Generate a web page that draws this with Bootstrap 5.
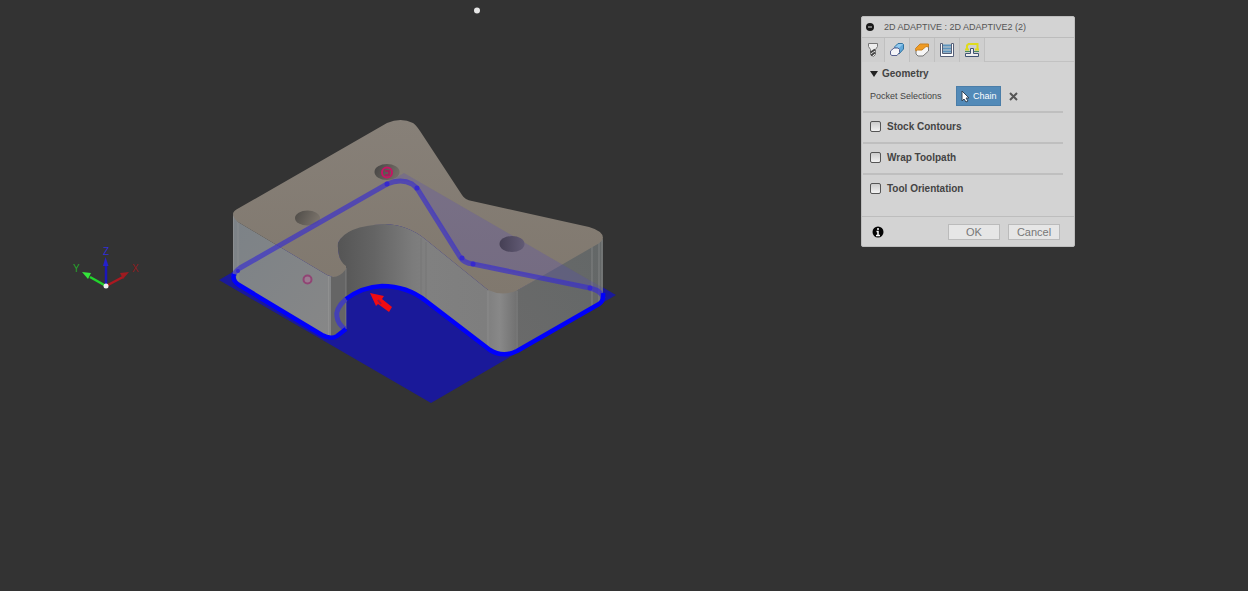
<!DOCTYPE html>
<html lang="en">
<head>
<meta charset="utf-8">
<meta name="viewport" content="width=device-width, initial-scale=1">
<title>2D Adaptive</title>
<link href="https://cdn.jsdelivr.net/npm/bootstrap@5.3.0/dist/css/bootstrap.min.css" rel="stylesheet">
<style>
body { background: #333; font-family: "Liberation Sans", Arial, sans-serif; font-size: 10px; line-height: 16px; color: #444; }
.model { height: 100vh; min-width: 0; }
.dialog { width: 214px; margin-top: 16px; margin-right: 173px; background: #d3d3d3; border: 1px solid #bdbdbd; border-radius: 2px; }
.dialog-title { height: 21px; font-size: 9px; font-weight: 400; color: #555; border-bottom: 1px solid #bcbcbc; gap: 10px; }
.tabs { height: 24px; border-bottom: 1px solid #c2c2c2; }
.tab { width: 25px; height: 24px; border: 0; border-right: 1px solid #c0c0c0; background: #cfcfcf; }
.tab:first-child { width: 23px; }
.tab.active { background: #d3d3d3; }
.heading { font-size: 10px; font-weight: 700; line-height: 16px; color: #444; }
.field { font-size: 9px; padding-right: 56px; margin-bottom: 1px; }
.chain { height: 20px; width: 45px; background: #528ab8; border: 1px solid #4a7da8; color: #fff; gap: 3px; }
.section { height: 31px; border-top: 2px solid #bfbfbf; gap: 6px; padding: 0 0 2px 2px; margin-right: 11px; margin-left: 1px; }
.section input { appearance: none; width: 11px; height: 11px; margin: 0 0 0 5px; border: 1px solid #555; border-radius: 2px; background: linear-gradient(#ccc, #f2f2f2); }
.dialog-foot { height: 30px; margin-top: 12px; padding: 0 14px 0 10px; border-top: 1px solid #bdbdbd; }
.action { width: 52px; height: 16px; background: #e6e6e6; border: 1px solid #bbb; color: #777; font-size: 11px; line-height: 14px; }
</style>
</head>
<body class="min-vh-100">
<main class="d-flex align-items-start">
<svg class="model flex-fill" viewBox="0 0 860 591" preserveAspectRatio="xMinYMin meet" role="img" aria-label="Part model with selected pocket chain">
  <defs>
    <linearGradient id="top" x1="0" y1="0" x2="0" y2="1"><stop offset="0" stop-color="#878078"/><stop offset="1" stop-color="#80786e"/></linearGradient>
    <linearGradient id="left" x1="0" y1="0" x2="1" y2="1"><stop offset="0" stop-color="#7c8287"/><stop offset="1" stop-color="#878787"/></linearGradient>
    <linearGradient id="pocket" gradientUnits="userSpaceOnUse" x1="338" y1="0" x2="518" y2="0"><stop offset="0" stop-color="#555"/><stop offset=".2" stop-color="#646464"/><stop offset=".42" stop-color="#7c7c7c"/><stop offset=".5" stop-color="#808080"/><stop offset=".82" stop-color="#7e7e7e"/><stop offset=".9" stop-color="#888"/><stop offset="1" stop-color="#6f6f6f"/></linearGradient>
    <linearGradient id="hole" x1="0" y1="0" x2="1" y2=".3"><stop offset="0" stop-color="#4e4b47"/><stop offset="1" stop-color="#787169"/></linearGradient>
    <linearGradient id="hole2" x1="0" y1="0" x2="1" y2=".3"><stop offset="0" stop-color="#454443"/><stop offset="1" stop-color="#716b64"/></linearGradient>
    <linearGradient id="holeb" x1="0" y1="0" x2="1" y2="0"><stop offset="0" stop-color="#453f54"/><stop offset="1" stop-color="#625b75"/></linearGradient>
    <linearGradient id="right" x1="0" y1="1" x2="1" y2="0"><stop offset="0" stop-color="#6a6a6a"/><stop offset="1" stop-color="#636767"/></linearGradient>
  </defs>
  <path d="M219 280 404 173 616 295 431 403Z" fill="#1a1999"/>
  <path d="M346 268Q337 260 338 243Q345 224 385 224Q408 225 425 239L488 290H518V350Q503 357 489 350L426 301Q407 286 382 286Q362 287 346 299Z" fill="url(#pocket)"/>
  <path d="M421 238V297M426 242V301" stroke="#777" fill="none"/>
  <path d="M233 214 238 222 327 275 333 277V338Q328 339 322 335L237 285Q233 282 233 277Z" fill="url(#left)"/>
  <path d="M331 277 346 268V330Q341 337 331 338Z" fill="#656565"/>
  <path d="M328.500 276V337M346 268V329M233.500 216V276M238 221V281" stroke="#999" stroke-opacity=".5"/>
  <path d="M516 291 603 239V301L516 351Z" fill="url(#right)"/>
  <path d="M488 291V350M517 291V350M592 247V306M599 242V302M602 239V300" stroke="#929595" stroke-opacity=".6" fill="none"/>
  <path d="M233 214Q233 211 239 208L387 123Q401 117 413 123Q416 125 420 131L462 195Q465 200 472 201L589 227Q603 231 603 238Q602 242 596 245L518 290Q503 297 488 290L425 239Q408 225 385 224Q345 226 338 243Q337 260 346 266V269Q340 277 333 277L327 275 238 222Q233 218 233 214Z" fill="url(#top)"/>
  <ellipse cx="307.500" cy="218" rx="12.500" ry="7.500" fill="url(#hole)"/>
  <ellipse cx="387" cy="172" rx="12.500" ry="8" fill="url(#hole2)"/>
  <path d="M392 180 404 173 603 288V296Q601 291 590 288L473 264Q466 263 463 260L417 187Q411 180 401 181Z" fill="#5549ba" opacity=".25"/>
  <ellipse cx="512" cy="244" rx="12.500" ry="8" fill="url(#holeb)"/>
  <path d="M234 276Q234 272 240 268L387 184Q401 178 412 184Q415 186 418 190L460 257Q464 263 473 264L590 288Q602 291 603 298" fill="none" stroke="#382cd0" stroke-opacity=".65" stroke-width="5"/>
  <path d="M346 299Q335 309 337 317Q338 324 345 329" fill="none" stroke="#4440b5" stroke-width="5"/>
  <g fill="#3629ce"><circle cx="387" cy="184" r="2.500"/><circle cx="417" cy="188" r="2.500"/><circle cx="462" cy="258" r="2.500"/><circle cx="473" cy="264" r="2.500"/><circle cx="590" cy="288" r="2.500"/><circle cx="238" cy="271" r="2"/></g>
  <path d="M234 274Q232 281 239 285L322 335Q331 340 337 336L346 329M346 299Q362 287 382 286Q407 286 426 301L490 350Q503 358 517 351L599 304Q604 301 603 293" fill="none" stroke="#0000fb" stroke-width="4.500" stroke-linejoin="round"/>
  <g fill="none" stroke-width="2"><circle cx="307.500" cy="279.500" r="4" stroke="#914474" fill="#9c7b91"/><circle cx="387" cy="172.500" r="5" stroke="#c51563"/><path d="M385 171h4v4h-4" stroke="#b01359" stroke-width="1.500"/></g>
  <path d="M370 293 384 296 382 299 392 307 389 312 378 304 376 306Z" fill="#f10b12"/>
  <path d="M378 300 381 304" stroke="#9c1545" stroke-width="2"/>
  <circle cx="477" cy="10.500" r="3" fill="#e6e6e6"/>
  <g stroke-width="2.500"><path d="M106 286V265" stroke="#1b16ba"/><path d="M106 286 90 277" stroke="#22d52d"/><path d="M106 286 123 277" stroke="#aa1820"/></g>
  <path d="M103 266 105.500 257 108.500 266Z" fill="#2521cc"/><path d="M82 272 91 273 88 279Z" fill="#34e43b"/><path d="M129 272 123 279 120 273Z" fill="#9e1b20"/>
  <circle cx="106" cy="286" r="2.500" fill="#eee"/>
  <g font-size="10"><text x="73" y="272" fill="#26a52a">Y</text><text x="103" y="255" fill="#322ed8">Z</text><text x="132" y="272" fill="#901c20">X</text></g>
</svg>

<section class="dialog flex-shrink-0" aria-label="2D Adaptive settings">
  <h1 class="dialog-title d-flex align-items-center m-0 ps-1">
    <svg width="8" height="8"><circle cx="4" cy="4" r="4" fill="#181818"/><path d="M2 4h4" stroke="#ddd"/></svg>
    <span>2D ADAPTIVE : 2D ADAPTIVE2 (2)</span>
  </h1>
  <div class="tabs d-flex" role="tablist">
    <button type="button" role="tab" class="tab p-0" aria-label="Tool"><svg width="16" height="16" viewBox="0 0 16 16"><path d="M3.500 1.500h9v3l-2 3v5l-2 2-3-2v-5l-2-3Z" fill="#eee" stroke="#777"/><path d="M5.500 10.500 10 7.500M6 13.500 10 10.500" stroke="#444" stroke-width="2"/></svg></button>
    <button type="button" role="tab" aria-selected="true" class="tab active p-0" aria-label="Geometry"><svg width="16" height="16" viewBox="0 0 16 16"><path d="M5.500 5 9 1.500h4.500l1 1V7L10 12Z" fill="#60a8da" stroke="#33749f"/><path d="M6 5 9.500 2H14L10 6Z" fill="#91c8ed"/><path d="M1.500 9 5 6h4l1.500 1.500v3L8 13.500H3l-1.500-1Z" fill="#f5f5f8" stroke="#57608e"/></svg></button>
    <button type="button" role="tab" class="tab p-0" aria-label="Heights"><svg width="16" height="16" viewBox="0 0 16 16"><path d="M2 8 7 3.500h7.500V9L9 14H4l-2-2Z" fill="#f6f6f6" stroke="#777"/><path d="M1.500 6.500 6 2h8.500v3L12 4.500 8 8H3.500L2 9Z" fill="#f09b22" stroke="#c78123"/></svg></button>
    <button type="button" role="tab" class="tab p-0" aria-label="Passes"><svg width="16" height="16" viewBox="0 0 16 16"><path d="M1.500 1.500h2v10h9v-10h2v13h-13Z" fill="#fff" stroke="#566078"/><path d="M4 3.500h8M4 6.500h8M4 9.500h8" stroke="#5b93bd" stroke-width="2"/></svg></button>
    <button type="button" role="tab" class="tab p-0" aria-label="Linking"><svg width="16" height="16" viewBox="0 0 16 16"><path d="M3 7V3.500L4.500 2h9v5M1 7.500h4M11 7.500h4" fill="none" stroke="#dedb1d" stroke-width="2"/><path d="M1.500 14.500v-3h5v-5h3v5h5v3Z" fill="#eee" stroke="#415474"/><path d="M1 9.500h5m4 0h5" stroke="#4b8a61"/></svg></button>
  </div>
  <h2 class="heading d-flex align-items-center m-0 ps-2 pt-1 gap-1"><svg width="8" height="6"><path d="M0 0h8L4 6Z" fill="#222"/></svg>Geometry</h2>
  <div class="field d-flex align-items-center ps-2 py-1">
    <span class="me-auto" id="pocketLabel">Pocket Selections</span>
    <button type="button" aria-describedby="pocketLabel" class="chain d-flex align-items-center p-0 ps-1"><svg width="9" height="13"><path d="M1 1v10l2-2 2 3 2-1-2-3h3Z" fill="#fff" stroke="#345"/></svg>Chain</button>
    <button type="button" class="d-flex border-0 bg-transparent p-0 ms-2" aria-label="Clear selection"><svg width="9" height="9"><path d="m1 1 7 7M8 1 1 8" stroke="#555" stroke-width="2"/></svg></button>
  </div>
  <label class="section heading d-flex align-items-center"><input type="checkbox">Stock Contours</label>
  <label class="section heading d-flex align-items-center"><input type="checkbox">Wrap Toolpath</label>
  <label class="section heading d-flex align-items-center"><input type="checkbox">Tool Orientation</label>
  <div class="dialog-foot d-flex align-items-center gap-2">
    <svg class="me-auto" width="12" height="12"><circle cx="6" cy="6" r="5.500" fill="#050505"/><path d="M6 2v2M4.500 5.500H6V9M4 9.500h4" stroke="#fff" stroke-width="1.500" fill="none"/></svg>
    <button type="button" class="action p-0">OK</button>
    <button type="button" class="action p-0">Cancel</button>
  </div>
</section>
</main>
<script src="https://cdn.jsdelivr.net/npm/bootstrap@5.3.0/dist/js/bootstrap.bundle.min.js"></script>
</body>
</html>
